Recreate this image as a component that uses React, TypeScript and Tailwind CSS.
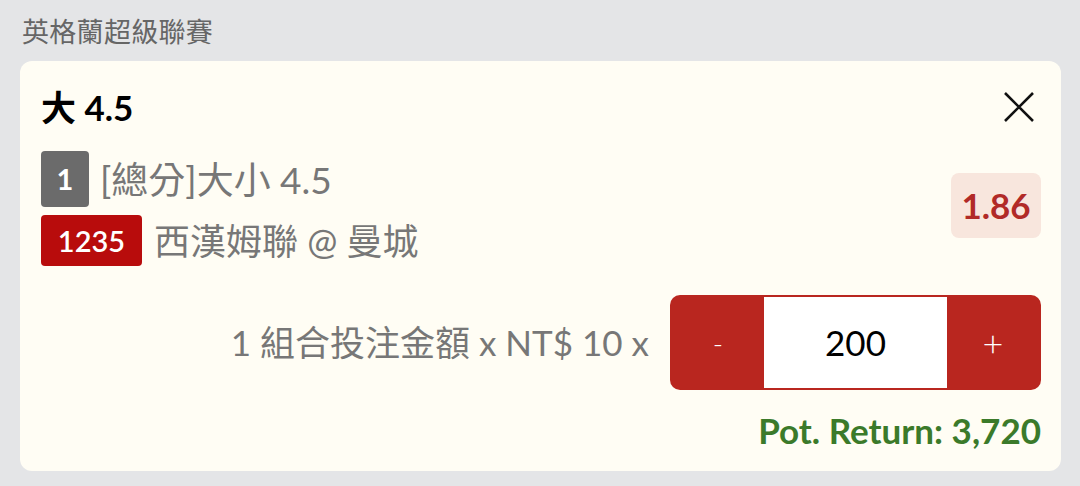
import React, { useState } from 'react';

const font = { fontFamily: 'Lato, "Noto Sans CJK TC", sans-serif' };

const App = () => {
  const [stake, setStake] = useState(200);
  const odds = 1.86;
  const potReturn = Math.round(stake * 10 * odds).toLocaleString('en-US');

  return (
    <div className="w-[1080px] h-[486px] bg-[#e4e5e7] px-[20px] pt-[14px] overflow-hidden" style={font}>
      <div className="text-[27px] leading-[36px] text-[#666] pl-[2px] tracking-[0.3px]">英格蘭超級聯賽</div>

      <div className="mt-[11px] w-[1041px] h-[410px] bg-[#fffdf4] rounded-[12px] pl-[21px] pr-[20px] pt-[22px]">
        <div className="flex items-start justify-between">
          <div className="text-[35px] leading-[48px] font-bold text-black">大 4.5</div>
          <button className="mt-[6px] mr-[4px] w-[36px] h-[36px] flex items-center justify-center">
            <svg width="34" height="34" viewBox="0 0 34 34" fill="none" stroke="#111" strokeWidth="2.6">
              <path d="M3 3 L31 31 M31 3 L3 31" />
            </svg>
          </button>
        </div>

        <div className="flex items-center justify-between mt-[20px]">
          <div className="flex flex-col gap-[8px]">
            <div className="flex items-center gap-[11px]">
              <span className="w-[48px] h-[56px] rounded-[4px] bg-[#6b6b6b] text-white text-[29px] font-bold flex items-center justify-center">1</span>
              <span className="text-[37px] text-[#777] leading-none">[總分]大小 4.5</span>
            </div>
            <div className="flex items-center gap-[12px]">
              <span className="w-[101px] h-[51px] rounded-[4px] bg-[#b80c0c] text-white text-[29px] font-semibold flex items-center justify-center">1235</span>
              <span className="text-[36px] text-[#777] leading-none">西漢姆聯 @ 曼城</span>
            </div>
          </div>
          <div className="w-[90px] h-[65px] rounded-[8px] bg-[#f8e6dd] flex items-center justify-center text-[35px] font-bold text-[#b12a27] mb-[6px]">
            {odds.toFixed(2)}
          </div>
        </div>

        <div className="flex items-center justify-end mt-[29px] gap-[21px]">
          <span className="text-[35px] text-[#777]">1 組合投注金額 x NT$ 10 x</span>
          <div className="flex w-[371px] h-[95px] rounded-[10px] bg-[#b9261f] overflow-hidden p-[2px]">
            <button onClick={() => setStake(Math.max(0, stake - 10))} className="w-[92px] text-white text-[28px] font-light flex items-center justify-center">-</button>
            <div className="flex-1 bg-white flex items-center justify-center text-[35px] text-black">{stake}</div>
            <button onClick={() => setStake(stake + 10)} className="w-[92px] text-white text-[36px] font-light flex items-center justify-center">+</button>
          </div>
        </div>

        <div className="text-right mt-[16px] text-[35px] font-bold text-[#3b7a2a] leading-[48px]">
          Pot. Return: {potReturn}
        </div>
      </div>
    </div>
  );
};

export default App;
